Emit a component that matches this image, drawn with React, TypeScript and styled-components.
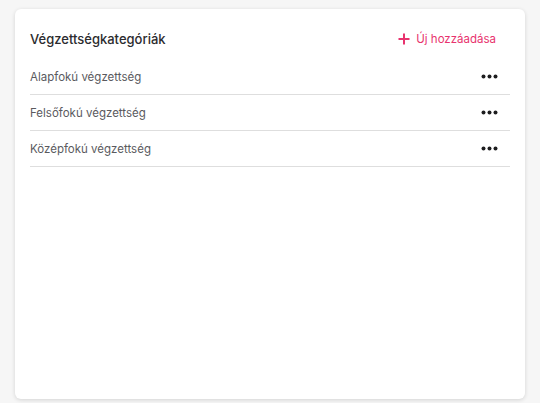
import styled, { createGlobalStyle } from 'styled-components';

const GlobalStyle = createGlobalStyle`
  body {
    margin: 0;
    background: #f6f6f6;
    font-family: Inter, "Noto Sans", sans-serif;
  }
`;

const categories = ['Alapfokú végzettség', 'Felsőfokú végzettség', 'Középfokú végzettség'];

const PlusIcon = () => (
  <svg width="12" height="12" viewBox="0 0 12 12">
    <path d="M6 0.5v11M0.5 6h11" stroke="#e8336e" strokeWidth="2" />
  </svg>
);

const DotsIcon = () => (
  <svg width="17" height="5" viewBox="0 0 17 5">
    <circle cx="2.5" cy="2.5" r="2" fill="#1d1d1f" />
    <circle cx="8.5" cy="2.5" r="2" fill="#1d1d1f" />
    <circle cx="14.5" cy="2.5" r="2" fill="#1d1d1f" />
  </svg>
);

export default function App() {
  return (
    <>
      <GlobalStyle />
      <Page>
        <Card>
          <Header>
            <Title>Végzettségkategóriák</Title>
            <AddButton>
              <PlusIcon />
              <span>Új hozzáadása</span>
            </AddButton>
          </Header>
          <List>
            {categories.map((name) => (
              <Row key={name}>
                <RowLabel>{name}</RowLabel>
                <MenuButton aria-label="Műveletek">
                  <DotsIcon />
                </MenuButton>
              </Row>
            ))}
          </List>
        </Card>
      </Page>
    </>
  );
}

const Page = styled.div`
  padding: 9px 15px 4px 15px;
`;

const Card = styled.div`
  height: 390px;
  box-sizing: border-box;
  background: #fff;
  border-radius: 6px;
  box-shadow: 0 1px 4px rgba(0, 0, 0, 0.14);
  padding: 20px 15px;
`;

const Header = styled.div`
  display: flex;
  justify-content: space-between;
  align-items: center;
  height: 20px;
  margin-bottom: 10px;
`;

const Title = styled.h2`
  margin: 0;
  font-size: 13px;
  font-weight: 500;
  color: #2b2b2e;
`;

const AddButton = styled.button`
  display: flex;
  align-items: center;
  gap: 6px;
  margin-right: 14px;
  padding: 0;
  border: none;
  background: none;
  color: #e8336e;
  font-family: inherit;
  font-size: 11.5px;
  cursor: pointer;
`;

const List = styled.div`
  display: flex;
  flex-direction: column;
`;

const Row = styled.div`
  display: flex;
  justify-content: space-between;
  align-items: center;
  height: 36px;
  border-bottom: 1px solid #dedede;
  box-sizing: border-box;
`;

const RowLabel = styled.span`
  font-size: 11.5px;
  color: #5a5a5e;
`;

const MenuButton = styled.button`
  display: flex;
  padding: 0;
  margin-right: 12px;
  border: none;
  background: none;
  cursor: pointer;
`;
